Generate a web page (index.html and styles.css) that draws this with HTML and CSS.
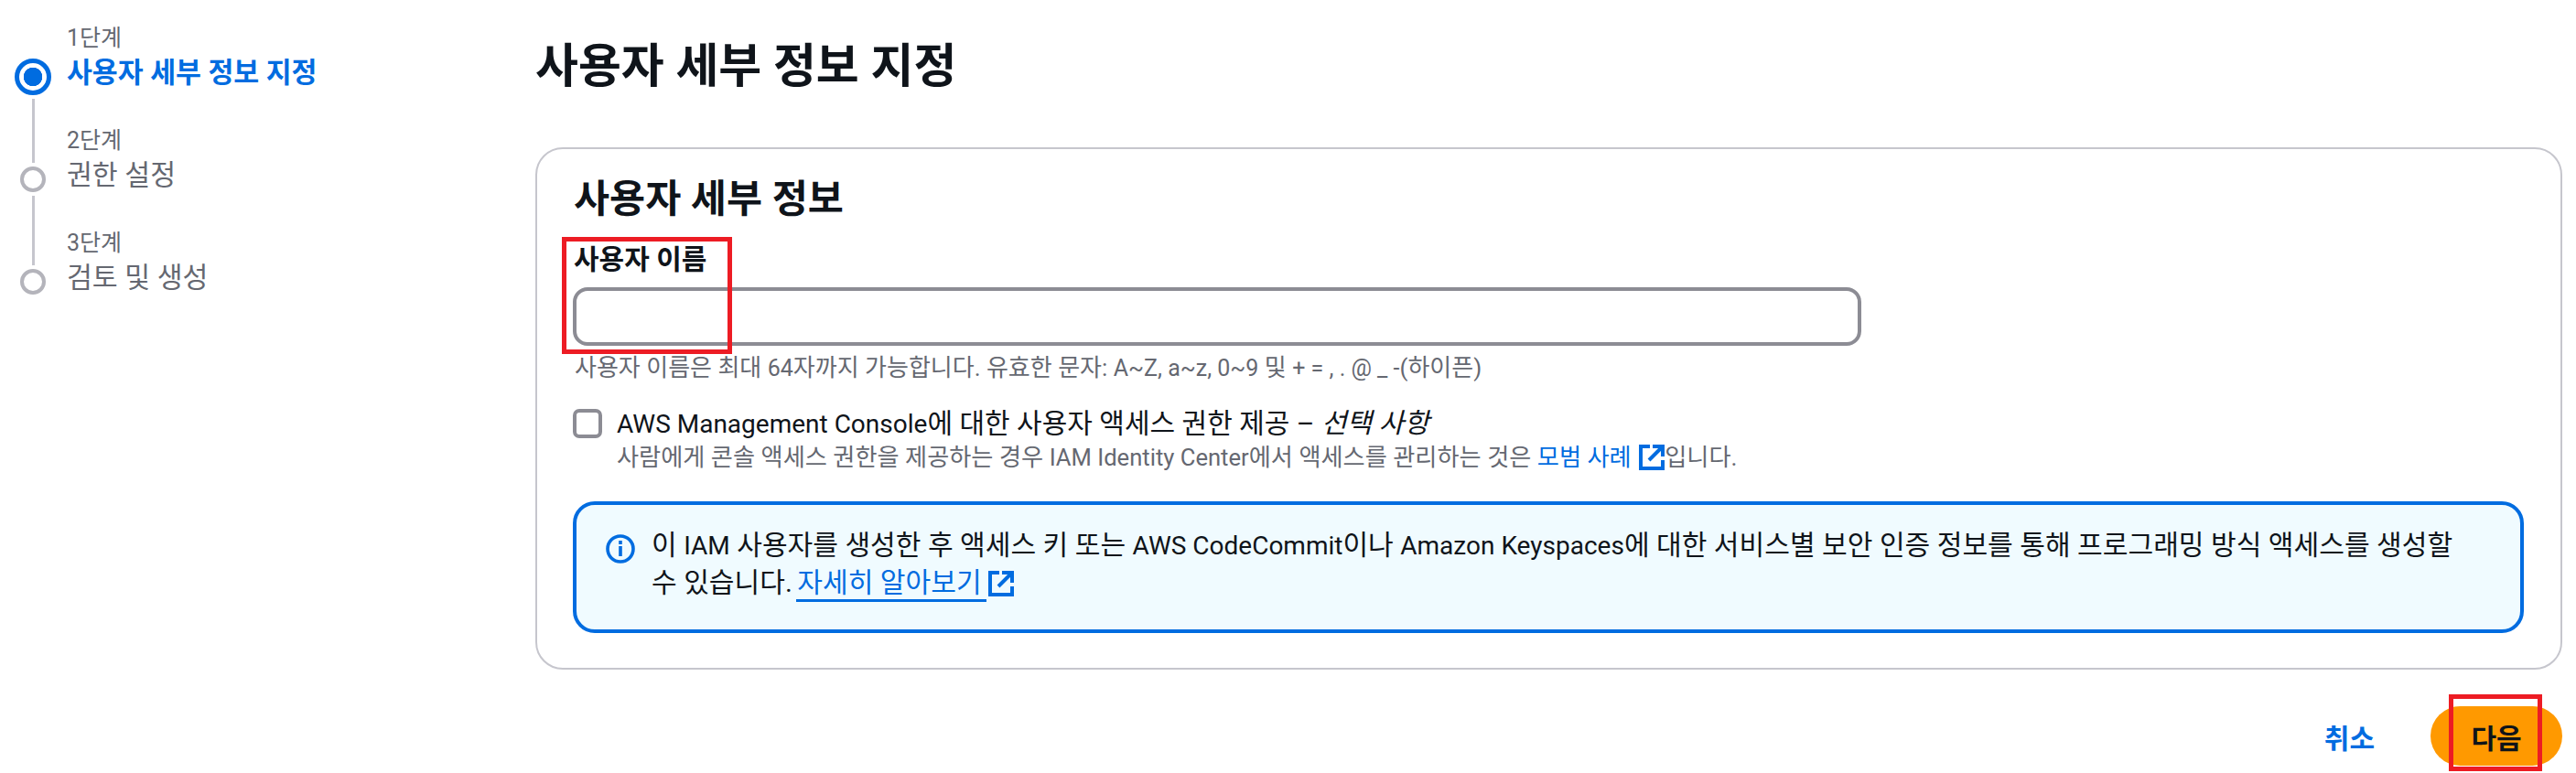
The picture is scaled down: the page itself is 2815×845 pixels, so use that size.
FILE: index.html
```html
<!DOCTYPE html>
<html lang="ko">
<head>
  <meta charset="UTF-8">
  <title>사용자 세부 정보 지정</title>
  <link rel="stylesheet" href="styles.css">
</head>
<body>

  <div class="page">
    <nav class="steps">
      <div class="step step-active">
        <div class="step-label">1단계</div>
        <div class="step-title">사용자 세부 정보 지정</div>
        <span class="dot"></span>
      </div>
      <div class="step">
        <div class="step-label">2단계</div>
        <div class="step-title">권한 설정</div>
        <span class="dot"></span>
        <span class="line"></span>
      </div>
      <div class="step">
        <div class="step-label">3단계</div>
        <div class="step-title">검토 및 생성</div>
        <span class="dot"></span>
        <span class="line"></span>
      </div>
    </nav>

    <main class="content">
      <h1>사용자 세부 정보 지정</h1>

      <section class="card">
        <h2>사용자 세부 정보</h2>

        <div class="field">
          <label class="field-label" for="username">사용자 이름</label>
          <input class="text-input" type="text" id="username">
          <div class="hint">사용자 이름은 최대 <span class="en">64</span>자까지 가능합니다. 유효한 문자: <span class="en">A~Z, a~z, 0~9</span> 및 <span class="en">+ = , . @ _ -</span>(하이픈)</div>
          <span class="mark mark-field"></span>
        </div>

        <div class="check-row">
          <span class="checkbox"></span>
          <div>
            <div class="check-label"><span class="en">AWS Management Console</span>에 대한 사용자 액세스 권한 제공 – <em>선택 사항</em></div>
            <div class="hint">사람에게 콘솔 액세스 권한을 제공하는 경우 <span class="en">IAM Identity Center</span>에서 액세스를 관리하는 것은 <a class="link-plain" href="#">모범 사례</a>
              <svg class="ext-icon" viewBox="0 0 28 28"><path d="M12 2H2v24h24V17M15 2h11v11M26 2 11 17"/></svg>입니다.</div>
          </div>
        </div>

        <div class="info-box">
          <svg class="info-icon" viewBox="0 0 32 32">
            <circle cx="16" cy="16" r="14"/>
            <path d="M16 13v11M16 7v4"/>
          </svg>
          <p>이 <span class="en">IAM</span> 사용자를 생성한 후 액세스 키 또는 <span class="en">AWS CodeCommit</span>이나 <span class="en">Amazon Keyspaces</span>에 대한 서비스별 보안 인증 정보를 통해 프로그래밍 방식 액세스를 생성할 수 있습니다. <a class="link-line" href="#">자세히 알아보기</a><svg class="ext-icon" viewBox="0 0 28 28"><path d="M12 2H2v24h24V17M15 2h11v11M26 2 11 17"/></svg></p>
        </div>
      </section>

      <div class="actions">
        <a class="cancel" href="#">취소</a>
        <button class="next">다음<span class="mark mark-next"></span></button>
      </div>
    </main>
  </div>

</body>
</html>
```

FILE: styles.css
```css
* {
  box-sizing: border-box;
}
html, body {
  margin: 0;
  height: 845px;
  overflow: hidden;
  background: #fff;
}
body {
  font-family: Roboto, "Noto Sans CJK KR", sans-serif;
  color: #0f141a;
}
.page {
  display: flex;
}

/* left side stepper */
.steps {
  width: 585px;
  flex: none;
  padding: 24px 0 0 73px;
}
.step {
  position: relative;
  height: 112px;
}
.step-label {
  font-size: 25px;
  line-height: 36px;
  color: #656871;
}
.step-title {
  font-size: 30.3px;
  line-height: 40px;
  color: #656871;
}
.step-active .step-title {
  color: #006ce0;
  font-weight: 700;
}
.dot {
  position: absolute;
  left: -51px;
  top: 46px;
  width: 28px;
  height: 28px;
  border: 4px solid #b4b4bb;
  border-radius: 50%;
  background: #fff;
}
.step-active .dot {
  left: -57px;
  top: 40px;
  width: 40px;
  height: 40px;
  border: 5px solid #006ce0;
  background: radial-gradient(circle, #006ce0 0 10px, #fff 10.5px);
}
.line {
  position: absolute;
  left: -38.5px;
  top: -34px;
  width: 3px;
  height: 76px;
  background: #c6c6cd;
}
.step-active + .step .line {
  top: -28px;
  height: 70px;
}

/* main column */
.content {
  flex: none;
  width: 2215px;
}
h1 {
  margin: 0;
  padding-top: 41px;
  height: 161px;
  font-size: 51px;
  line-height: 64px;
  font-weight: 700;
}
.card {
  height: 571px;
  padding: 29px 40px 0 39px;
  border: 2px solid #c6c6cd;
  border-radius: 30px;
}
h2 {
  margin: 0 0 0 1px;
  font-size: 42.5px;
  line-height: 52px;
  font-weight: 700;
}
.field {
  position: relative;
  margin-top: 22px;
}
.field-label {
  display: block;
  margin-left: 1px;
  font-size: 30px;
  line-height: 36px;
  font-weight: 700;
}
.text-input {
  display: block;
  width: 1408px;
  height: 64px;
  margin-top: 12px;
  border: 4px solid #8c8c94;
  border-radius: 16px;
  background: #fff;
}
.hint {
  font-size: 26px;
  line-height: 36px;
  color: #656871;
}
.hint .en {
  font-size: 25px;
}
.field .hint {
  margin: 6px 0 0 2px;
}
.check-row {
  display: flex;
  gap: 16px;
  margin-top: 22px;
}
.checkbox {
  flex: none;
  width: 32px;
  height: 32px;
  margin-top: 4px;
  border: 4px solid #8c8c94;
  border-radius: 7px;
  background: #fff;
}
.check-label {
  font-size: 30px;
  line-height: 40px;
}
.en {
  font-size: 28px;
}
.check-row .hint {
  font-size: 26.2px;
  line-height: 32px;
}
.check-row .hint .en {
  font-size: 25.6px;
}
.link-plain {
  color: #006ce0;
  text-decoration: none;
}
.ext-icon {
  width: 28px;
  height: 28px;
  margin-left: 2px;
  vertical-align: -5px;
  fill: none;
  stroke: #006ce0;
  stroke-width: 4;
}
.info-box {
  display: flex;
  gap: 18px;
  height: 144px;
  margin-top: 32px;
  padding: 24px 48px 0 32px;
  border: 4px solid #006ce0;
  border-radius: 24px;
  background: #f0fbff;
}
.info-icon {
  flex: none;
  width: 32px;
  height: 32px;
  margin-top: 8px;
  fill: none;
  stroke: #006ce0;
  stroke-width: 3.6;
}
.info-box p {
  margin: 0;
  font-size: 30.1px;
  line-height: 40px;
}
.info-box .en {
  font-size: 28px;
}
.link-line {
  margin-left: -3px;
  padding: 0 5px 1px 1px;
  color: #006ce0;
  text-decoration: none;
  border-bottom: 3px solid #006ce0;
}

/* bottom buttons */
.actions {
  display: flex;
  justify-content: flex-end;
  align-items: center;
  gap: 61px;
  margin-top: 40px;
}
.cancel {
  color: #006ce0;
  font-size: 30px;
  font-weight: 700;
  text-decoration: none;
}
.next {
  position: relative;
  width: 144px;
  height: 65px;
  border: none;
  border-radius: 33px;
  background: #ff9900;
  color: #0f141a;
  font: 700 30px Roboto, "Noto Sans CJK KR", sans-serif;
}

/* red highlight boxes drawn over the screenshot */
.mark {
  position: absolute;
  border: 5px solid #ed1c24;
}
.mark-field {
  left: -12px;
  top: -7px;
  width: 186px;
  height: 128px;
}
.mark-next {
  left: 20px;
  top: -13px;
  width: 102px;
  height: 84px;
}
```
